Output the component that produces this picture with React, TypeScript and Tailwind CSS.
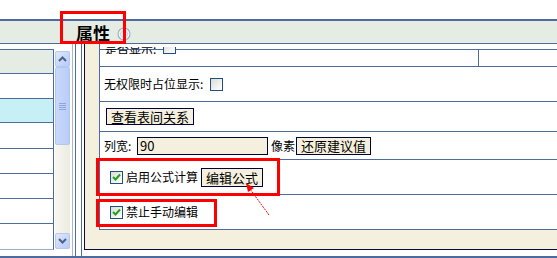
import React from "react";

const font = "font-['Noto_Sans_CJK_SC','Liberation_Sans',sans-serif]";

function Check({ checked }: { checked?: boolean }) {
  return (
    <span className="inline-flex h-[13px] w-[13px] shrink-0 items-center justify-center border border-[#1c5180] bg-gradient-to-br from-[#dcdcd4] to-white">
      {checked && (
        <svg width="9" height="9" viewBox="0 0 9 9">
          <path d="M1 4 L3.5 6.5 L8 1.5" stroke="#21a121" strokeWidth="2" fill="none" />
        </svg>
      )}
    </span>
  );
}

function Btn({ children, className = "" }: { children: React.ReactNode; className?: string }) {
  return (
    <span
      className={`inline-flex shrink-0 items-center justify-center border border-[#00003c] bg-[#f5f0dd] text-[13px] leading-none ${className}`}
    >
      {children}
    </span>
  );
}

function ScrollBtn({ up }: { up?: boolean }) {
  return (
    <div className="flex h-[16px] w-[15px] items-center justify-center rounded-[2px] border border-[#b8c9ef] bg-gradient-to-br from-[#dfe8fd] to-[#b6cbf7]">
      <svg width="9" height="6" viewBox="0 0 9 6">
        <path d={up ? "M1 5 L4.5 1.5 L8 5" : "M1 1 L4.5 4.5 L8 1"} stroke="#4d6185" strokeWidth="2" fill="none" />
      </svg>
    </div>
  );
}

export default function App() {
  const rows = [
    "h-[25px]",
    "h-[24px] bg-[#c7eff6]",
    "h-[26px]",
    "h-[25px]",
    "h-[25px]",
    "h-[25px]",
  ];

  return (
    <div className={`relative h-[258px] w-[557px] overflow-hidden bg-white text-black ${font}`}>
      <div className="h-[19px]" />

      {/* panel title */}
      <div className="flex h-[25px] items-center border-t-2 border-b border-[#4d6b9f] bg-[#e5ece3] pl-[76px]">
        <span className="text-[17px] font-bold leading-none">属性</span>
        <svg className="ml-[7px] mt-[3px]" width="14" height="14" viewBox="0 0 14 14">
          <circle cx="7" cy="7" r="6" fill="#eef3f6" stroke="#9db3c6" strokeWidth="1.2" />
          <circle cx="7" cy="7" r="3.5" fill="none" stroke="#c9d6e0" strokeWidth="1" />
        </svg>
      </div>

      <div className="flex h-[212px]">
        {/* left list */}
        <div className="w-[72px] shrink-0 pt-[5px]">
          <div className="flex">
            <div className="h-[201px] w-[54px] border-t border-r border-b border-[#4d6b9f] border-b-[#9aabc8]">
              <div className="h-[24px] border-b border-[#4d6b9f] bg-[#e5ece3]" />
              {rows.map((r, i) => (
                <div key={i} className={`${r} border-b border-[#4d6b9f]`} />
              ))}
            </div>
            <div className="ml-[1px] mt-[2px] flex h-[198px] w-[15px] flex-col bg-gradient-to-r from-[#f7f6f0] to-[#ecebe2]">
              <ScrollBtn up />
              <div className="flex h-[78px] w-[15px] items-center justify-center rounded-[2px] border border-[#b3c6f0] bg-gradient-to-r from-[#c9d8fc] to-[#b9cdf8]">
                <div className="flex flex-col gap-[1px]">
                  <div className="h-[1px] w-[7px] bg-[#8ea6d8]" />
                  <div className="h-[1px] w-[7px] bg-[#8ea6d8]" />
                  <div className="h-[1px] w-[7px] bg-[#8ea6d8]" />
                  <div className="h-[1px] w-[7px] bg-[#8ea6d8]" />
                </div>
              </div>
              <div className="flex-1" />
              <ScrollBtn />
            </div>
          </div>
        </div>

        <div className="w-[1px] shrink-0 bg-[#a9b4c4]" />
        <div className="ml-[2px] w-[1px] shrink-0 bg-[#4d6b9f]" />
        <div className="ml-[5px] w-[1px] shrink-0 bg-[#4d6b9f]" />

        {/* property form */}
        <div className="ml-[2px] flex-1">
          <div className="h-[206px] overflow-hidden border-l border-b border-[#0a0a3c] bg-[#f5f0dd] pl-[14px]">
            <div className="border-l border-b border-[#4d6b9f] bg-white pt-[3px] text-[12px] leading-none">
              {/* row scrolled mostly out of view */}
              <div className="relative z-10 flex h-[7px] items-end gap-[7px] overflow-hidden pl-[5px]">
                <span className="translate-y-[1px]">是否显示:</span>
                <Check />
              </div>
              <div className="-mt-[5px] flex h-[18px] border-y border-[#4d6b9f]">
                <div className="w-[379px] border-r border-[#4d6b9f]" />
              </div>
              <div className="flex h-[35px] items-center gap-[7px] border-b border-[#4d6b9f] pl-[4px]">
                <span>无权限时占位显示:</span>
                <Check />
              </div>
              <div className="flex h-[30px] items-center border-b border-[#4d6b9f] pl-[6px]">
                <Btn className="h-[17px] w-[88px]">查看表间关系</Btn>
              </div>
              <div className="flex h-[28px] items-center border-b border-[#4d6b9f] pl-[4px]">
                <span className="w-[33px]">列宽:</span>
                <span className="flex h-[18px] w-[131px] items-center border border-[#00003c] bg-[#f5f0dd] pl-[2px] text-[13px]">
                  90
                </span>
                <span className="ml-[3px] w-[25px]">像素</span>
                <Btn className="h-[18px] w-[75px]">还原建议值</Btn>
              </div>
              <div className="flex h-[35px] items-center border-b border-[#4d6b9f] pl-[10px]">
                <Check checked />
                <span className="ml-[3px]">启用公式计算</span>
                <Btn className="ml-[3px] h-[19px] w-[62px]">编辑公式</Btn>
              </div>
              <div className="flex h-[34px] items-center pl-[10px]">
                <Check checked />
                <span className="ml-[3px]">禁止手动编辑</span>
              </div>
            </div>
          </div>
        </div>
      </div>

      <div className="h-[2px] bg-[#4d6b9f]" />

      {/* annotations */}
      <div className="absolute left-[60px] top-[11px] h-[33px] w-[66px] border-[3px] border-[#ff0000]" />
      <div className="absolute left-[96px] top-[158px] h-[38px] w-[184px] border-[3px] border-[#ff0000]" />
      <div className="absolute left-[96px] top-[199px] h-[28px] w-[121px] border-[3px] border-[#ff0000]" />
      <svg className="absolute left-[240px] top-[178px]" width="36" height="42" viewBox="0 0 36 42">
        <path d="M29 37 L10 11" stroke="#ff0000" strokeWidth="1" strokeDasharray="2 1" fill="none" />
        <path d="M6 5 L14 10 L8 14 Z" fill="#ff0000" />
      </svg>
    </div>
  );
}
